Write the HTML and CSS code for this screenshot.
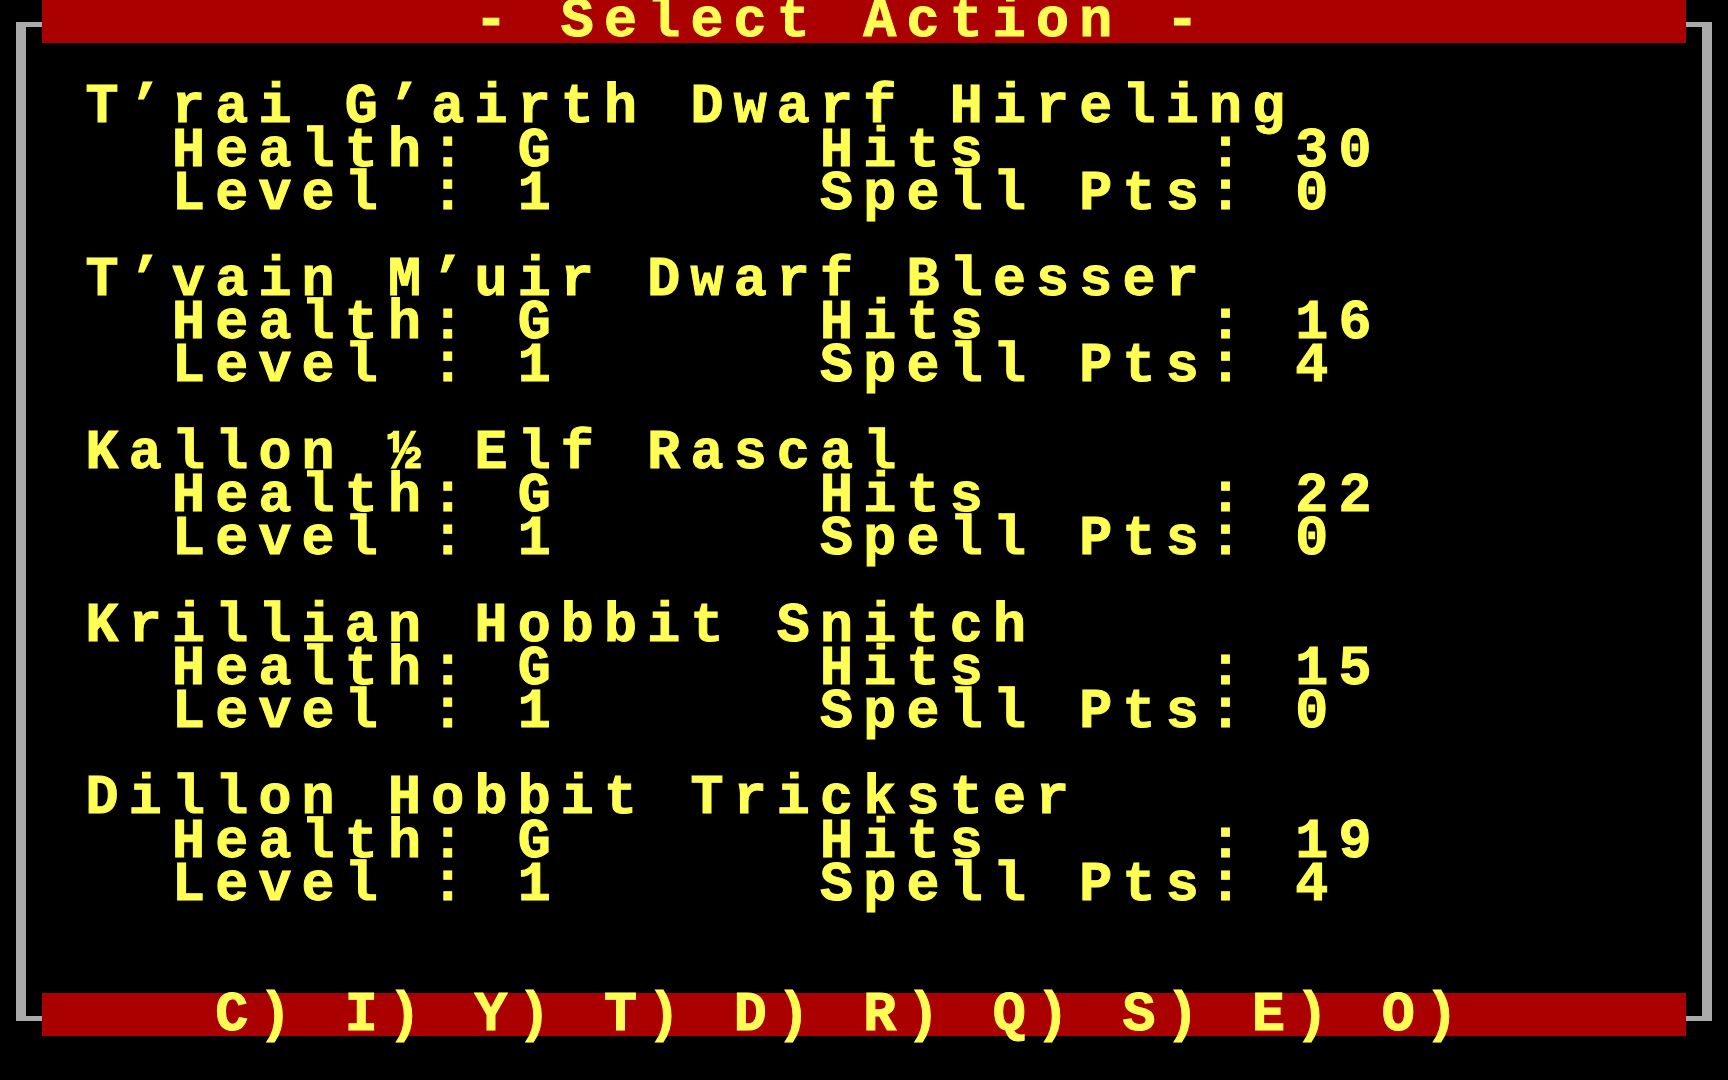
FILE: index.html
```html
<!DOCTYPE html>
<html lang="en">
<head>
<meta charset="utf-8">
<title>Select Action</title>
<link rel="stylesheet" href="styles.css">
</head>
<body>
<div class="screen">
  <div class="frame">
    <div class="bar bar-top"><span class="bar-text title">- Select Action -</span></div>
    <div class="spacer"></div>
    <div class="party">
      <div class="member">
        <div class="line name">T’rai G’airth Dwarf Hireling</div>
        <div class="line stat">Health: G      Hits     : 30</div>
        <div class="line stat">Level : 1      Spell Pts: 0</div>
      </div>
      <div class="member">
        <div class="line name">T’vain M’uir Dwarf Blesser</div>
        <div class="line stat">Health: G      Hits     : 16</div>
        <div class="line stat">Level : 1      Spell Pts: 4</div>
      </div>
      <div class="member">
        <div class="line name">Kallon ½ Elf Rascal</div>
        <div class="line stat">Health: G      Hits     : 22</div>
        <div class="line stat">Level : 1      Spell Pts: 0</div>
      </div>
      <div class="member">
        <div class="line name">Krillian Hobbit Snitch</div>
        <div class="line stat">Health: G      Hits     : 15</div>
        <div class="line stat">Level : 1      Spell Pts: 0</div>
      </div>
      <div class="member">
        <div class="line name">Dillon Hobbit Trickster</div>
        <div class="line stat">Health: G      Hits     : 19</div>
        <div class="line stat">Level : 1      Spell Pts: 4</div>
      </div>
    </div>
    <div class="bar bar-bottom"><span class="bar-text menu">C) I) Y) T) D) R) Q) S) E) O)</span></div>
  </div>
</div>
</body>
</html>
```
FILE: styles.css
```css
:root {
  --c: 43.2px;
  --px: 5.4px;
  --fs: 55px;
  --yellow: #ffff55;
  --red: #aa0000;
  --gray: #aaaaaa;
}

* { box-sizing: border-box; }

html, body {
  margin: 0;
  padding: 0;
  background: #000;
}

body {
  width: 1728px;
  height: 1080px;
  overflow: hidden;
}

.screen {
  width: 1728px;
  height: 1080px;
  padding-top: calc(var(--px) * 4);
  padding-left: calc(var(--px) * 3);
  background: #000;
  font-family: "Liberation Mono", "DejaVu Sans Mono", monospace;
  font-weight: bold;
  font-size: var(--fs);
  font-variant-numeric: slashed-zero;
  letter-spacing: calc(var(--c) - 0.6 * var(--fs));
  color: var(--yellow);
  -webkit-text-stroke: 1px var(--yellow);
}

.frame {
  width: calc(var(--px) * 314);
  height: calc(var(--px) * 185);
  border-style: solid;
  border-color: var(--gray);
  border-width: var(--px) calc(var(--px) * 2);
  display: flex;
  flex-direction: column;
}

.bar {
  flex: none;
  height: var(--c);
  margin-left: calc(var(--px) * 3);
  margin-right: calc(var(--px) * 3);
  padding-top: 1.4px;
  background: var(--red);
  white-space: pre;
  line-height: 41.8px;
}

.bar-top {
  margin-top: calc(var(--px) * -5);
}

.title {
  padding-left: calc(var(--c) * 10);
}

.menu {
  padding-left: calc(var(--c) * 4);
}

.spacer {
  flex: none;
  height: var(--c);
}

.party {
  flex: none;
  display: flex;
  flex-direction: column;
  gap: var(--c);
  height: calc(var(--c) * 19);
}

.member {
  display: flex;
  flex-direction: column;
}

.line {
  height: var(--c);
  padding-top: 1.4px;
  line-height: 41.8px;
  white-space: pre;
}

.name {
  padding-left: calc(var(--c) * 2 - var(--px) * 5);
}

.stat {
  padding-left: calc(var(--c) * 4 - var(--px) * 5);
}

.bar-bottom {
  margin-top: calc(var(--c) * 2);
}
```
